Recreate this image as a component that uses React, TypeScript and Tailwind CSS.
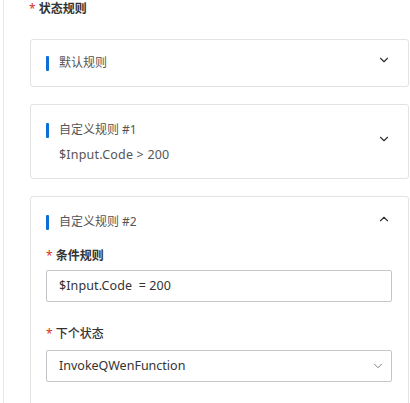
import { ChevronDown, ChevronUp } from "lucide-react"

const font = "font-['Noto_Sans','Noto_Sans_CJK_SC',sans-serif]"

function Bar() {
  return <span className="w-[3px] h-[15px] bg-[#0a6fd6] rounded-[1px] mr-[10px] shrink-0" />
}

function Required({ label, bold = true }: { label: string; bold?: boolean }) {
  return (
    <div className="flex items-center h-4 leading-4 text-[12px]">
      <span className="text-[#d93026] mr-[3px]">*</span>
      <span className={bold ? "font-bold text-[#333]" : "font-medium text-[#333]"}>{label}</span>
    </div>
  )
}

export default function App() {
  return (
    <div className={`w-[410px] h-[403px] overflow-hidden bg-white ${font}`}>
      <div className="ml-[3px] w-[430px] h-full border-l border-[#e8e8e8] pl-[26px] pt-[1px]">
        <div className="ml-[-1px]">
          <Required label="状态规则" />
        </div>

        <div className="w-[379px] mt-[22px] flex flex-col gap-[17px]">
          {/* 默认规则 */}
          <div className="border border-[#e3e3e3] rounded-[3px] px-[15px] py-[15px] flex items-center">
            <Bar />
            <span className="flex-1 text-[12px] leading-4 text-[#555]">默认规则</span>
            <ChevronDown className="w-[14px] h-[14px] text-[#333] mr-[2px] -mt-[6px]" strokeWidth={2} />
          </div>

          {/* 自定义规则 #1 */}
          <div className="border border-[#e3e3e3] rounded-[3px] px-[15px] pt-[17px] pb-[15px] flex items-center">
            <div className="flex-1 flex flex-col gap-[9px]">
              <div className="flex items-center">
                <Bar />
                <span className="text-[12px] leading-4 text-[#555]">自定义规则 #1</span>
              </div>
              <span className="pl-[13px] text-[12.5px] tracking-[0.2px] leading-4 text-[#555]">$Input.Code &gt; 200</span>
            </div>
            <ChevronDown className="w-[14px] h-[14px] text-[#333] mr-[2px] -mt-[8px]" strokeWidth={2} />
          </div>

          {/* 自定义规则 #2 */}
          <div className="border border-[#e3e3e3] rounded-[3px] pl-[15px] pr-[16px] pt-[17px] pb-[32px]">
            <div className="flex items-center">
              <Bar />
              <span className="flex-1 text-[12px] leading-4 text-[#555]">自定义规则 #2</span>
              <ChevronUp className="w-[14px] h-[14px] text-[#333] mr-[1px] -mt-[6px]" strokeWidth={2} />
            </div>

            <div className="mt-[18px]">
              <Required label="条件规则" />
            </div>
            <div className="mt-[6px] h-[32px] border border-[#c4c6cc] rounded-[2px] px-[12px] flex items-center text-[12.5px] tracking-[0.1px] text-[#333]">
              $Input.Code&nbsp; = 200
            </div>

            <div className="mt-[24px]">
              <Required label="下个状态" bold={false} />
            </div>
            <div className="mt-[8px] h-[32px] border border-[#c4c6cc] rounded-[2px] pl-[12px] pr-[6px] flex items-center text-[12.5px] text-[#333]">
              <span className="flex-1">InvokeQWenFunction</span>
              <ChevronDown className="w-[14px] h-[14px] text-[#777]" strokeWidth={1.6} />
            </div>
          </div>
        </div>
      </div>
    </div>
  )
}
